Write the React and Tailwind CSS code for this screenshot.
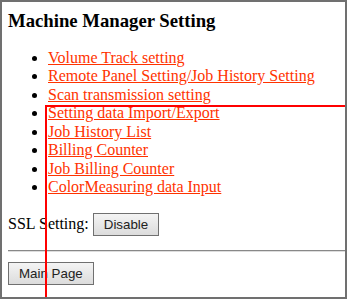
const links = [
  'Volume Track setting',
  'Remote Panel Setting/Job History Setting',
  'Scan transmission setting',
  'Setting data Import/Export',
  'Job History List',
  'Billing Counter',
  'Job Billing Counter',
  'ColorMeasuring data Input',
];

function Button({ children }) {
  return (
    <button
      type="button"
      className="h-[23px] border border-[#707070] bg-gradient-to-b from-[#f4f4f4] to-[#dcdcdc] px-[10px] align-middle font-['Liberation_Sans',Arial,sans-serif] text-[13.33px] leading-none text-[#222]"
    >
      {children}
    </button>
  );
}

export default function App() {
  return (
    <div className="relative h-[299px] w-[347px] overflow-hidden border-2 border-[#707070] bg-white pl-[6px] pt-[5px] font-['Liberation_Serif','Times_New_Roman',serif] text-[16px] text-black">
      <h3 className="mb-[14px] text-[18.72px] font-bold leading-normal">Machine Manager Setting</h3>

      <ul className="mb-4 list-disc pl-10 leading-[18.4px]">
        {links.map((label) => (
          <li key={label}>
            <a href="#" className="text-[#ff3300] underline">
              {label}
            </a>
          </li>
        ))}
      </ul>

      <p className="flex h-[24px] items-center gap-[4px]">
        SSL Setting: <Button>Disable</Button>
      </p>

      <hr className="mt-[14px] mb-[8px] border-t border-b border-t-[#888] border-b-[#ddd]" />

      <Button>Main Page</Button>

      <div className="pointer-events-none absolute left-[43px] top-[103px] h-[220px] w-[300px] border-l-2 border-t-2 border-[#ff0000]" />
    </div>
  );
}
